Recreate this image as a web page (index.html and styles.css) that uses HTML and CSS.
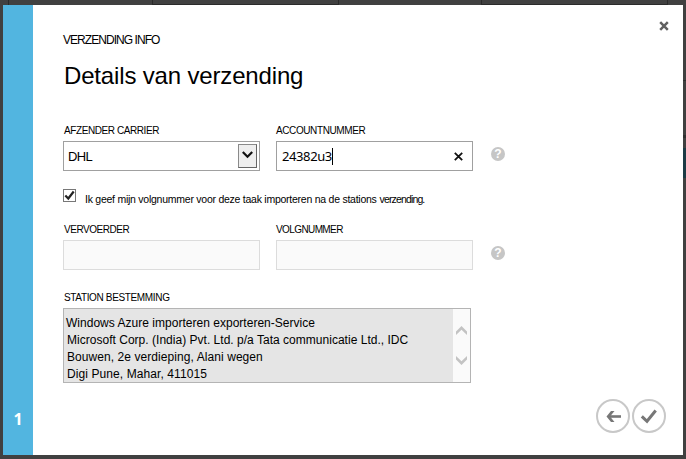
FILE: index.html
```html
<!DOCTYPE html>
<html lang="nl">
<head>
<meta charset="utf-8">
<title>Details van verzending</title>
<link rel="stylesheet" href="styles.css">
</head>
<body>
<div class="backdrop">
  <div class="tiles"><i class="tile tile-a"></i><i class="tile tile-b"></i><i class="tile tile-c"></i></div>
  <div class="frame">
    <main class="dialog">
      <aside class="steps"><span class="step">1</span></aside>
      <section class="content">
        <header class="head">
          <div>
            <p class="eyebrow">VERZENDING INFO</p>
            <h1 class="title">Details van verzending</h1>
          </div>
          <svg class="close" width="10" height="10" viewBox="0 0 10 10"><path d="M1.200 1.200l7.600 7.600M8.800 1.200l-7.600 7.600" stroke="#606060" stroke-width="2.500"/></svg>
        </header>

        <div class="row">
          <div class="field">
            <span class="label l-carrier">AFZENDER CARRIER</span>
            <div class="box select">
              <span class="dhl">DHL</span>
              <span class="drop"><svg width="11" height="8" viewBox="0 0 11 8"><path d="M.8 1l4.7 4.7L10.200 1" fill="none" stroke="#111" stroke-width="2.2"/></svg></span>
            </div>
          </div>
          <div class="field">
            <span class="label l-account">ACCOUNTNUMMER</span>
            <div class="box input">
              <span class="value">24382u3</span><i class="caret"></i>
              <svg class="clear" width="9" height="9" viewBox="0 0 9 9"><path d="M.8.8l7.400 7.400M8.200.8L.8 8.200" stroke="#111" stroke-width="1.8"/></svg>
            </div>
          </div>
          <span class="help">?</span>
        </div>

        <div class="check-row">
          <span class="checkbox"><svg width="11" height="11" viewBox="0 0 11 11"><path d="M1.300 5.500l3 3L9.700 1.500" fill="none" stroke="#222" stroke-width="2.200"/></svg></span>
          <span class="check-text"><span class="ct-a">Ik geef mijn volgnummer voor deze taak importeren na de stations</span> <span class="ct-b">verzending.</span></span>
        </div>

        <div class="row row-two">
          <div class="field"><span class="label l-vervoerder">VERVOERDER</span><div class="box disabled"></div></div>
          <div class="field"><span class="label l-volg">VOLGNUMMER</span><div class="box disabled"></div></div>
          <span class="help">?</span>
        </div>

        <div class="station">
          <span class="label l-station">STATION BESTEMMING</span>
          <div class="area">
            <div class="lines">
              <p class="line-1">Windows Azure importeren exporteren-Service</p>
              <p class="line-2">Microsoft Corp. (India) Pvt. Ltd. p/a Tata communicatie Ltd., IDC</p>
              <p class="line-3">Bouwen, 2e verdieping, Alani wegen</p>
              <p class="line-4">Digi Pune, Mahar, 411015</p>
            </div>
            <div class="scroll">
              <svg width="11" height="9" viewBox="0 0 11 9"><path d="M0 5.500L5.500 0 11 5.500V9L5.500 3.800 0 9z" fill="#c3c3c3"/></svg>
              <svg width="11" height="9" viewBox="0 0 11 9"><path d="M0 3.500L5.500 9 11 3.500V0L5.500 5.200 0 0z" fill="#c3c3c3"/></svg>
            </div>
          </div>
        </div>

        <footer class="actions">
          <svg width="34" height="34" viewBox="0 0 34 34"><circle cx="17" cy="17" r="16" fill="#fff" stroke="#c8c8c8" stroke-width="2"/><path d="M25 17.500H12.500" stroke="#777" stroke-width="2.600"/><path d="M18.500 12h-3.500l-4.500 5.500 4.500 5.500h3.500l-4.500-5.500z" fill="#777"/></svg>
          <svg width="34" height="34" viewBox="0 0 34 34"><circle cx="17" cy="17" r="16" fill="#fff" stroke="#c8c8c8" stroke-width="2"/><path d="M9.800 17.300l5.200 5L23.700 11.500" fill="none" stroke="#777" stroke-width="3"/></svg>
        </footer>
      </section>
    </main>
    <div class="edge"></div>
  </div>
</div>
</body>
</html>
```

FILE: styles.css
```css
* { box-sizing: border-box; margin: 0; }
body { font-family: "Liberation Sans", Arial, sans-serif; color: #000; overflow: hidden; }
.backdrop { width: 686px; height: 459px; background: #404040; }
.tiles { display: flex; height: 5px; padding-left: 8px; }
.tile { height: 5px; border: 1px solid #2a2a2a; border-top: 0; }
.tile-a { width: 1px; border-width: 0 0 0 1px; }
.tile-b { width: 187px; margin-left: 143px; }
.tile-c { width: 187px; margin-left: 142px; }
.frame { display: flex; height: 450px; padding-left: 3px; }
.dialog { display: flex; width: 680px; height: 450px; background: #fff; }
.edge { width: 3px; height: 450px; background: linear-gradient(#404040 75px, #2e2e2e 75px, #2e2e2e 76px, #404040 76px, #404040 130px, #303030 130px, #303030 133px, #404040 133px, #404040 143px, #1c3b45 143px, #1c3b45 173px, #404040 173px); }
.steps { display: flex; align-items: flex-end; justify-content: center; width: 30px; padding-bottom: 26px; background: #52b5e0; }
.step { font: bold 16px/20px "Noto Sans", sans-serif; color: #fff; }
.content { width: 650px; padding: 27px 13px 0 30px; }
.head { display: flex; justify-content: space-between; height: 93px; }
.eyebrow { font-size: 12px; line-height: 16px; letter-spacing: -0.95px; white-space: nowrap; }
.title { margin: 13px 0 0 1px; font-size: 24px; line-height: 30px; font-weight: 400; letter-spacing: -0.16px; white-space: nowrap; }
.close { margin: -11px 1px 0 0; }
.row { display: flex; gap: 16px; height: 46px; }
.field { width: 197px; }
.label { display: block; height: 16px; padding-left: 1px; font-size: 10px; line-height: 12px; white-space: nowrap; }
.l-carrier { letter-spacing: -0.42px; }
.l-account { padding-left: 0; letter-spacing: -0.4px; }
.l-vervoerder { letter-spacing: -0.45px; }
.l-volg { padding-left: 0; letter-spacing: -0.6px; }
.l-station { letter-spacing: -0.35px; }
.box { display: flex; align-items: center; height: 30px; border: 1px solid #a0a0a0; font-size: 13px; }
.select { justify-content: space-between; padding: 0 2px 0 4px; }
.dhl { letter-spacing: -0.6px; }
.drop { display: flex; align-items: center; justify-content: center; width: 19px; height: 24px; padding-bottom: 2px; border: 1px solid #8a8a8a; border-right-color: #666; border-bottom-color: #666; background: #efefef; }
.input { padding-left: 5px; font-family: "Noto Sans", sans-serif; }
.value { letter-spacing: -0.4px; }
.caret { width: 1px; height: 17px; background: #000; }
.clear { margin: 0 9px 0 auto; }
.help { width: 14px; height: 14px; margin: 22px 0 0 2px; border-radius: 50%; background: #c6c6c6; color: #fff; font-size: 12px; line-height: 14px; font-weight: 700; text-align: center; }
.check-row { display: flex; height: 34px; margin-top: 18px; }
.checkbox { display: block; width: 13px; height: 13px; border: 1px solid #777; }
.checkbox svg { display: block; }
.check-text { margin: 4px 0 0 9px; font-size: 10.5px; line-height: 13px; white-space: nowrap; }
.ct-a { letter-spacing: -0.25px; }
.ct-b { letter-spacing: -0.85px; }
.row-two { margin-top: 1px; }
.disabled { border-color: #dcdcdc; background: #fafafa; }
.station { margin-top: 22px; }
.area { display: flex; width: 408px; height: 75px; border: 1px solid #b4b4b4; background: #e5e5e5; }
.lines { flex: 1; padding: 6px 0 0 3px; font-size: 12px; line-height: 17px; white-space: nowrap; }
.line-1 { margin-left: -1px; letter-spacing: 0.02px; }
.line-2 { letter-spacing: 0.02px; }
.line-3 { letter-spacing: 0.07px; }
.line-4 { letter-spacing: 0.09px; }
.scroll { display: flex; flex-direction: column; align-items: center; justify-content: center; gap: 21px; width: 17px; background: #fafafa; }
.actions { display: flex; justify-content: flex-end; gap: 2px; margin: 16px 4px 0 0; }
```
